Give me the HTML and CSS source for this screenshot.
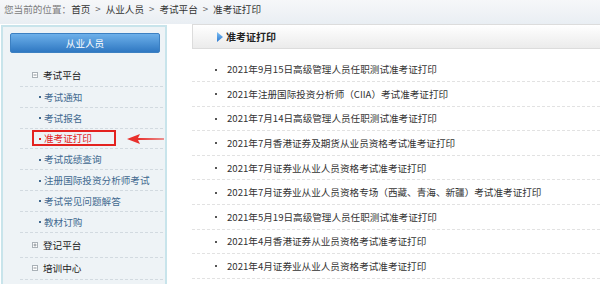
FILE: index.html
```html
<!DOCTYPE html>
<html lang="zh-CN">
<head>
<meta charset="utf-8">
<title>准考证打印</title>
<link rel="stylesheet" href="styles.css">
</head>
<body>
<div class="crumb"><span class="lbl">您当前的位置：</span><a>首页</a><span class="sep">&gt;</span><a>从业人员</a><span class="sep">&gt;</span><a>考试平台</a><span class="sep">&gt;</span><a>准考证打印</a></div>
<div class="main">
  <aside class="side">
    <div class="side-btn">从业人员</div>
    <ul class="menu">
      <li class="top"><svg class="ico" width="6" height="6" viewBox="0 0 6 6"><rect x="0.5" y="0.5" width="5" height="5" fill="#fff" stroke="#a9b1b7"/><path d="M1.5 3h3" stroke="#8a9298"/></svg>考试平台</li>
      <li class="sub"><span class="dot"></span>考试通知</li>
      <li class="sub"><span class="dot"></span>考试报名</li>
      <li class="sub hl-row"><span class="hl"><span class="dot"></span>准考证打印</span></li>
      <li class="sub"><span class="dot"></span>考试成绩查询</li>
      <li class="sub"><span class="dot"></span>注册国际投资分析师考试</li>
      <li class="sub"><span class="dot"></span>考试常见问题解答</li>
      <li class="sub"><span class="dot"></span>教材订购</li>
      <li class="top tall"><svg class="ico" width="6" height="6" viewBox="0 0 6 6"><rect x="0.5" y="0.5" width="5" height="5" fill="#fff" stroke="#a9b1b7"/><path d="M1.5 3h3M3 1.5v3" stroke="#8a9298"/></svg>登记平台</li>
      <li class="top short"><svg class="ico" width="6" height="6" viewBox="0 0 6 6"><rect x="0.5" y="0.5" width="5" height="5" fill="#fff" stroke="#a9b1b7"/><path d="M1.5 3h3" stroke="#8a9298"/></svg>培训中心</li>
    </ul>
    <svg class="arrow" width="37" height="10" viewBox="0 0 37 10"><polygon points="0,5 13,0 11,4 37,4.4 37,5.6 11,6 13,10" fill="#e8302c"/></svg>
  </aside>
  <section class="content">
    <div class="head"><svg class="tri" width="6" height="10" viewBox="0 0 6 10"><defs><linearGradient id="g" x1="0" y1="0" x2="0" y2="1"><stop offset="0" stop-color="#7fc0f4"/><stop offset="1" stop-color="#2b78d0"/></linearGradient></defs><polygon points="0,0 6,5 0,10" fill="url(#g)"/></svg><h2>准考证打印</h2></div>
    <ul class="list">
      <li><span class="b"></span>2021年9月15日高级管理人员任职测试准考证打印</li>
      <li><span class="b"></span>2021年注册国际投资分析师（CIIA）考试准考证打印</li>
      <li><span class="b"></span>2021年7月14日高级管理人员任职测试准考证打印</li>
      <li><span class="b"></span>2021年7月香港证券及期货从业员资格考试准考证打印</li>
      <li><span class="b"></span>2021年7月证券业从业人员资格考试准考证打印</li>
      <li><span class="b"></span>2021年7月证券业从业人员资格专场（西藏、青海、新疆）考试准考证打印</li>
      <li><span class="b"></span>2021年5月19日高级管理人员任职测试准考证打印</li>
      <li><span class="b"></span>2021年4月香港证券从业员资格考试准考证打印</li>
      <li><span class="b"></span>2021年4月证券业从业人员资格考试准考证打印</li>
    </ul>
  </section>
</div>
</body>
</html>
```
FILE: styles.css
```css
html, body {
  margin: 0;
  padding: 0;
}
body {
  font-family: "Noto Sans CJK SC", "Liberation Sans", sans-serif;
  font-size: 9.6px;
  color: #333;
  background: #fff;
  overflow: hidden;
}
.crumb {
  height: 24px;
  box-sizing: border-box;
  padding: 3px 0 0 4px;
  line-height: 12px;
  background: linear-gradient(#f6f7f9, #e9eef3);
  color: #333;
  white-space: nowrap;
}
.crumb .lbl {
  color: #7d7d7d;
}
.crumb .sep {
  display: inline-block;
  margin: 0 5px;
  color: #666;
}
.main {
  display: flex;
  align-items: flex-start;
}
.side {
  position: relative;
  margin: 1px 0 0 1px;
  width: 166px;
  height: 259px;
  box-sizing: border-box;
  border: 2px solid #c8e4eb;
  border-bottom: 0;
  background: #eef3f6;
  padding: 6px 5px 0 7px;
}
.side-btn {
  height: 20px;
  line-height: 18px;
  text-align: center;
  color: #fff;
  background: linear-gradient(#6db0ea, #2f78c2);
  border: 1px solid #3c80c2;
  box-sizing: border-box;
  border-radius: 2px;
}
.menu {
  list-style: none;
  margin: 10px -3px 0 10px;
  padding: 0;
}
.menu li {
  box-sizing: border-box;
  border-bottom: 1px dashed #d2dae0;
  display: flex;
  align-items: center;
  white-space: nowrap;
}
.top {
  height: 24px;
  padding-left: 12px;
  color: #222;
}
.top.tall {
  height: 25px;
}
.top.short {
  height: 22px;
}
.ico {
  margin-right: 5px;
  flex: none;
}
.sub {
  height: 20.8px;
  padding-left: 19px;
  color: #41698f;
}
.dot {
  display: inline-block;
  flex: none;
  width: 5px;
  height: 2px;
  margin-top: 1px;
  background: radial-gradient(circle at 1px 1px, currentColor 1px, transparent 1.2px) no-repeat;
}
.menu .hl-row {
  padding-left: 12px;
}
.hl {
  display: inline-flex;
  align-items: center;
  height: 16px;
  box-sizing: border-box;
  border: 2px solid #e3221f;
  padding: 0 22px 0 5px;
  color: #e3221f;
}
.arrow {
  position: absolute;
  left: 124px;
  top: 107px;
}
.content {
  flex: 1;
  margin-left: 25px;
}
.head {
  height: 25px;
  box-sizing: border-box;
  border: 1px solid #dcdcdc;
  border-right: 0;
  background: linear-gradient(#ffffff, #ebebeb);
  display: flex;
  align-items: center;
  padding-left: 24px;
}
.tri {
  margin-right: 3px;
  flex: none;
}
.head h2 {
  margin: 0;
  font-size: 10px;
  font-weight: bold;
  color: #222;
}
.list {
  list-style: none;
  margin: 8.4px 0 0;
  padding: 0;
}
.list li {
  height: 24.6px;
  box-sizing: border-box;
  border-bottom: 1px dashed #e2e2e2;
  display: flex;
  align-items: center;
  padding-left: 23px;
  white-space: nowrap;
  color: #333;
}
.list .b {
  display: inline-block;
  flex: none;
  width: 12px;
  height: 2px;
  margin-top: 1px;
  background: radial-gradient(circle at 1px 1px, #555 1px, transparent 1.2px) no-repeat;
}
```
